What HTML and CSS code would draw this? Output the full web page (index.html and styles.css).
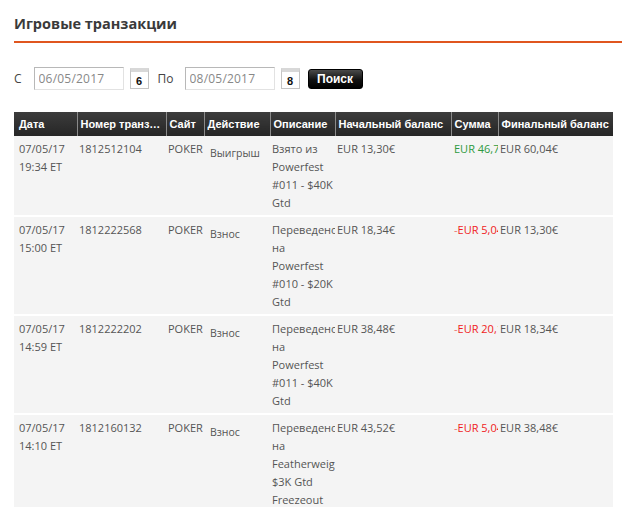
FILE: index.html
```html
<!DOCTYPE html>
<html lang="ru">
<head>
<meta charset="utf-8">
<title>Игровые транзакции</title>
<link rel="stylesheet" href="styles.css">
</head>
<body>
<div class="page">
  <h2 class="title">Игровые транзакции</h2>
  <div class="filters">
    <span class="lbl">С</span>
    <input class="date" type="text" value="06/05/2017">
    <span class="cal"><span class="cal-num">6</span></span>
    <span class="lbl lbl-to">По</span>
    <input class="date" type="text" value="08/05/2017">
    <span class="cal"><span class="cal-num">8</span></span>
    <button class="btn">Поиск</button>
  </div>
  <table class="tx">
    <colgroup>
      <col class="c1"><col class="c2"><col class="c3"><col class="c4">
      <col class="c5"><col class="c6"><col class="c7"><col class="c8">
    </colgroup>
    <thead>
      <tr>
        <th class="first">Дата</th>
        <th>Номер транзакции</th>
        <th>Сайт</th>
        <th>Действие</th>
        <th>Описание</th>
        <th>Начальный баланс</th>
        <th>Сумма</th>
        <th>Финальный баланс</th>
      </tr>
    </thead>
    <tbody>
      <tr>
        <td class="first">07/05/17<br>19:34 ET</td>
        <td>1812512104</td>
        <td>POKER</td>
        <td class="act">Выигрыш</td>
        <td>Взято из<br>Powerfest<br>#011 - $40K<br>Gtd</td>
        <td>EUR 13,30€</td>
        <td class="pos">EUR 46,74€</td>
        <td>EUR 60,04€</td>
      </tr>
      <tr>
        <td class="first">07/05/17<br>15:00 ET</td>
        <td>1812222568</td>
        <td>POKER</td>
        <td class="act">Взнос</td>
        <td>Переведено<br>на<br>Powerfest<br>#010 - $20K<br>Gtd</td>
        <td>EUR 18,34€</td>
        <td class="neg"><span class="minus">-</span>EUR 5,04€</td>
        <td>EUR 13,30€</td>
      </tr>
      <tr>
        <td class="first">07/05/17<br>14:59 ET</td>
        <td>1812222202</td>
        <td>POKER</td>
        <td class="act">Взнос</td>
        <td>Переведено<br>на<br>Powerfest<br>#011 - $40K<br>Gtd</td>
        <td>EUR 38,48€</td>
        <td class="neg"><span class="minus">-</span>EUR 20,14€</td>
        <td>EUR 18,34€</td>
      </tr>
      <tr>
        <td class="first">07/05/17<br>14:10 ET</td>
        <td>1812160132</td>
        <td>POKER</td>
        <td class="act">Взнос</td>
        <td>Переведено<br>на<br>Featherweight<br>$3K Gtd<br>Freezeout</td>
        <td>EUR 43,52€</td>
        <td class="neg"><span class="minus">-</span>EUR 5,04€</td>
        <td>EUR 38,48€</td>
      </tr>
    </tbody>
  </table>
</div>
</body>
</html>
```
FILE: styles.css
```css
* { box-sizing: border-box; }

body {
  margin: 0;
  background: #fff;
  font-family: "Open Sans", "Liberation Sans", sans-serif;
  color: #444;
}

.page {
  padding: 14px 9px 0 14px;
}

.title {
  margin: 0;
  font-size: 14.5px;
  line-height: 20px;
  font-weight: 700;
  color: #3a3a3a;
  padding-bottom: 7px;
  border-bottom: 2px solid #e0561f;
}

.filters {
  display: flex;
  align-items: center;
  margin-top: 24px;
  height: 23px;
}

.lbl {
  font-size: 12px;
  color: #444;
  margin-right: 12px;
}

.lbl-to {
  margin-left: 9px;
  margin-right: 11px;
}

.date {
  width: 90px;
  height: 23px;
  border: 1px solid #e2e2e2;
  border-top-color: #b8b8b8;
  border-left-color: #b8b8b8;
  padding: 0 4px;
  font-family: "Open Sans", "Liberation Sans", sans-serif;
  font-size: 12px;
  color: #888;
  background: #fff;
  letter-spacing: 0.2px;
}

.cal {
  margin-left: 6px;
  width: 19px;
  height: 21px;
  border: 1px solid #c4c4c4;
  border-top-width: 4px;
  border-top-color: #d8d8d8;
  display: flex;
  align-items: flex-end;
  justify-content: center;
  background: #fff;
}

.cal-num {
  font-family: "Liberation Sans", sans-serif;
  font-weight: 700;
  font-size: 11px;
  line-height: 14px;
  color: #111;
}

.btn {
  margin-left: 8px;
  width: 55px;
  height: 20px;
  border: 1px solid #000;
  border-radius: 3px;
  background: linear-gradient(#4a4a4a, #111 55%, #000);
  color: #fff;
  font-family: "Liberation Sans", sans-serif;
  font-weight: 700;
  font-size: 12px;
  padding: 0;
}

.tx {
  margin-top: 22px;
  width: 599px;
  table-layout: fixed;
  border-collapse: collapse;
  font-size: 11px;
}

.c1 { width: 63px; }
.c2 { width: 89px; }
.c3 { width: 38px; }
.c4 { width: 66px; }
.c5 { width: 65px; }
.c6 { width: 116px; }
.c7 { width: 47px; }
.c8 { width: 115px; }

.tx th {
  height: 24px;
  padding: 0 2px 0 3px;
  text-align: left;
  font-family: "Liberation Sans", sans-serif;
  font-weight: 700;
  font-size: 11px;
  color: #fff;
  background: linear-gradient(#3c3c3c, #262626);
  border-left: 1px solid #8a8a8a;
  white-space: nowrap;
  overflow: hidden;
  text-overflow: ellipsis;
}

.tx th.first {
  border-left: none;
  padding-left: 5px;
}

.tx td {
  vertical-align: top;
  padding: 4px 2px 3px;
  line-height: 18px;
  color: #555;
  background: #f4f4f4;
  border-bottom: 2px solid #fff;
  white-space: nowrap;
  overflow: hidden;
}

.tx td.first {
  padding-left: 5px;
}

.tx td.act {
  padding-top: 8px;
  padding-left: 6px;
  font-size: 10.5px;
}

.tx td.pos { color: #2e9a3e; padding-left: 3px; }
.tx td.neg { color: #f01c1c; padding-left: 3px; }
.minus { color: #f07070; }
```
